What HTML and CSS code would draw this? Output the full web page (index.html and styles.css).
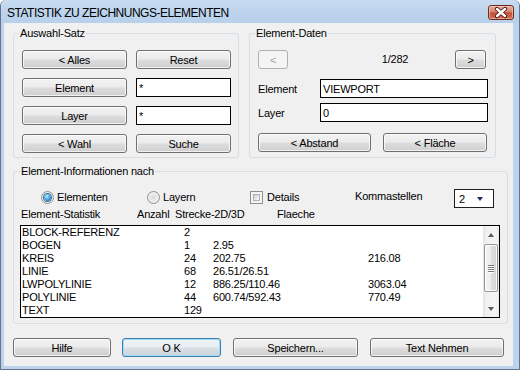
FILE: index.html
```html
<!DOCTYPE html>
<html lang="de">
<head>
<meta charset="utf-8">
<title>Statistik zu Zeichnungs-Elementen</title>
<link rel="stylesheet" href="styles.css">
</head>
<body>
<div class="window">
  <div class="titlebar">
    <span class="title">STATISTIK ZU ZEICHNUNGS-ELEMENTEN</span>
    <button class="close" aria-label="Schließen">
      <svg width="24" height="13" viewBox="0 0 24 13">
        <path d="M8 3 L16 10 M16 3 L8 10" stroke="#4a1409" stroke-width="4.2" stroke-linecap="round" fill="none"/>
        <path d="M8 3 L16 10 M16 3 L8 10" stroke="#ffffff" stroke-width="2.4" stroke-linecap="round" fill="none"/>
      </svg>
    </button>
  </div>
  <div class="client">
    <div class="top-row">
      <fieldset class="group g-auswahl">
        <legend class="legend-shift">Auswahl-Satz</legend>
        <div class="auswahl-grid">
          <button class="btn">&lt; Alles</button>
          <button class="btn btn-inset">Reset</button>
          <button class="btn">Element</button>
          <input class="field" type="text" value="*">
          <button class="btn">Layer</button>
          <input class="field" type="text" value="*">
          <button class="btn">&lt; Wahl</button>
          <button class="btn btn-inset">Suche</button>
        </div>
      </fieldset>
      <fieldset class="group g-daten">
        <legend class="legend-shift">Element-Daten</legend>
        <div class="nav-row">
          <button class="btn btn-disabled btn-prev">&lt;</button>
          <span class="counter">1/282</span>
          <button class="btn btn-next">&gt;</button>
        </div>
        <div class="field-row row-element">
          <span class="field-label">Element</span>
          <input class="field field-grow" type="text" value="VIEWPORT">
        </div>
        <div class="field-row row-layer">
          <span class="field-label">Layer</span>
          <input class="field field-grow" type="text" value="0">
        </div>
        <div class="daten-buttons">
          <button class="btn btn-abstand">&lt; Abstand</button>
          <button class="btn btn-flaeche">&lt; Fläche</button>
        </div>
      </fieldset>
    </div>

    <fieldset class="group g-info">
      <legend>Element-Informationen nach</legend>
      <div class="options-row">
        <label class="opt opt-elementen"><span class="radio on"><span class="dot"></span></span>Elementen</label>
        <label class="opt opt-layern"><span class="radio"></span>Layern</label>
        <label class="opt opt-details"><span class="check"><span class="check-inner"></span></span>Details</label>
        <span class="opt opt-komma">Kommastellen</span>
        <div class="combo"><span>2</span><span class="combo-arrow"></span></div>
      </div>
      <div class="list-head">
        <span>Element-Statistik</span>
        <span>Anzahl</span>
        <span>Strecke-2D/3D</span>
        <span>Flaeche</span>
      </div>
      <div class="listbox">
        <div class="rows">
          <div class="row"><span>BLOCK-REFERENZ</span><span>2</span><span></span><span></span></div>
          <div class="row"><span>BOGEN</span><span>1</span><span>2.95</span><span></span></div>
          <div class="row"><span>KREIS</span><span>24</span><span>202.75</span><span>216.08</span></div>
          <div class="row"><span>LINIE</span><span>68</span><span>26.51/26.51</span><span></span></div>
          <div class="row"><span>LWPOLYLINIE</span><span>12</span><span>886.25/110.46</span><span>3063.04</span></div>
          <div class="row"><span>POLYLINIE</span><span>44</span><span>600.74/592.43</span><span>770.49</span></div>
          <div class="row"><span>TEXT</span><span>129</span><span></span><span></span></div>
        </div>
        <div class="scrollbar">
          <div class="sb-btn"><span class="arrow-up"></span></div>
          <div class="sb-thumb"><span class="grip"></span><span class="grip"></span><span class="grip"></span><span class="grip"></span></div>
          <div class="sb-track"></div>
          <div class="sb-btn"><span class="arrow-down"></span></div>
        </div>
      </div>
    </fieldset>

    <div class="bottom-row">
      <button class="btn b-hilfe">Hilfe</button>
      <button class="btn btn-default b-ok">O K</button>
      <button class="btn b-speichern">Speichern...</button>
      <button class="btn b-text">Text Nehmen</button>
    </div>
  </div>
</div>
</body>
</html>
```

FILE: styles.css
```css
* { box-sizing: border-box; }
html, body { margin: 0; padding: 0; }
body {
  width: 520px;
  height: 370px;
  overflow: hidden;
  background: #ffffff;
  font-family: "Liberation Sans", Arial, sans-serif;
  font-size: 11px;
  letter-spacing: -0.2px;
  color: #000;
}

.window {
  width: 520px;
  height: 370px;
  display: flex;
  flex-direction: column;
  background: #bdd3eb;
  border: 1px solid #62758c;
  border-top: none;
  border-radius: 6px 6px 0 0;
}

.titlebar {
  height: 23px;
  flex: none;
  display: flex;
  align-items: flex-start;
  padding: 0 5px 0 6px;
  background: linear-gradient(to bottom, #c8dcf1 0%, #bcd3ec 60%, #b8d0ea 100%);
  border-radius: 6px 6px 0 0;
}
.title {
  margin-top: 6px;
  font-size: 12px;
  letter-spacing: -0.5px;
  line-height: 14px;
  white-space: nowrap;
}
.close {
  margin: 5px 0 0 auto;
  width: 26px;
  height: 15px;
  padding: 0;
  border: 1px solid #6b2a1c;
  border-radius: 3px;
  background: linear-gradient(to bottom, #e9ad9e 0%, #d8836f 45%, #c5513a 52%, #cf6c52 100%);
  box-shadow: inset 0 0 0 1px rgba(255, 220, 210, 0.55);
  display: flex;
  align-items: center;
  justify-content: center;
}
.close svg { display: block; }

.client {
  flex: 1;
  margin: 0 6px 3px 3px;
  background: #f0f0f0;
  padding: 3px 0 0 9px;
}

.top-row {
  display: flex;
  gap: 10px;
  align-items: stretch;
}

.group {
  margin: 0;
  min-width: 0;
  border: 1px solid #d5dfe5;
  border-radius: 3px;
}
.group legend {
  padding: 0 1px;
  line-height: 14px;
  height: 14px;
}
.legend-shift { margin-left: -3px; }

.g-auswahl {
  width: 226px;
  padding: 10px 7px 4px 8px;
}
.auswahl-grid {
  display: grid;
  grid-template-columns: 105px 95px;
  grid-auto-rows: 19px;
  column-gap: 9px;
  row-gap: 9px;
}
.btn-inset { margin: 0 1px; }

.g-daten {
  width: 247px;
  padding: 10px 7px 4px 8px;
}

.btn {
  margin: 0;
  padding: 0;
  height: 19px;
  font: inherit;
  letter-spacing: inherit;
  color: #000;
  border: 1px solid #707070;
  border-radius: 3px;
  background: linear-gradient(to bottom, #f2f2f2 0%, #ebebeb 48%, #dddddd 52%, #cfcfcf 100%);
  box-shadow: inset 0 0 0 1px rgba(255, 255, 255, 0.7);
  display: flex;
  align-items: center;
  justify-content: center;
  white-space: nowrap;
}
.btn-disabled {
  color: #a3a3a3;
  border-color: #adb2b5;
  background: #f4f4f4;
  box-shadow: none;
}
.btn-default {
  border-color: #3c7fb1;
  box-shadow: inset 0 0 0 1px #9fdcf5;
  background: linear-gradient(to bottom, #f0f4f7 0%, #e9eef2 48%, #d9e0e5 52%, #ccd5dc 100%);
}

.field {
  margin: 0;
  height: 19px;
  padding: 0 2px;
  font: inherit;
  letter-spacing: inherit;
  color: #000;
  background: #fff;
  border: 1px solid #000;
  border-radius: 0;
  outline: none;
  min-width: 0;
  width: 100%;
}

.nav-row {
  display: flex;
  height: 19px;
}
.btn-prev { width: 30px; }
.btn-next { width: 31px; margin-right: 2px; }
.counter {
  flex: 1;
  padding-left: 47px;
  text-align: center;
  line-height: 19px;
}

.field-row {
  display: flex;
  align-items: center;
  height: 19px;
}
.row-element { margin-top: 10px; }
.row-layer { margin-top: 5px; }
.field-label { width: 62px; flex: none; }
.field-grow { flex: 1; }

.daten-buttons {
  display: flex;
  gap: 12px;
  margin-top: 11px;
}
.btn-abstand { width: 113px; }
.btn-flaeche { width: 104px; }

.g-info {
  width: 495px;
  margin-top: 6px;
  padding: 11px 7px 5px 6px;
}

.options-row {
  display: flex;
  align-items: center;
  height: 19px;
  padding-left: 21px;
}
.opt {
  display: flex;
  align-items: center;
  gap: 3px;
  flex: none;
}
.opt-elementen { width: 106px; margin-top: -3px; }
.opt-layern { width: 103px; margin-top: -3px; }
.opt-details { width: 105px; gap: 4px; margin-top: -3px; }
.opt-komma { width: 99px; margin-top: -6px; }

.radio {
  width: 13px;
  height: 13px;
  border-radius: 50%;
  border: 1px solid #8e8f8f;
  background: radial-gradient(circle at 50% 50%, #dadada 0%, #ececec 55%, #f7f7f7 100%);
  display: flex;
  align-items: center;
  justify-content: center;
  flex: none;
}
.dot {
  width: 7px;
  height: 7px;
  border-radius: 50%;
  background: radial-gradient(circle at 40% 35%, #c4ecfd 0%, #4aa9e6 45%, #1d5f99 100%);
  box-shadow: 0 0 0 1px #3c6e99;
}

.check {
  width: 13px;
  height: 13px;
  border: 1px solid #8e8f8f;
  background: #f4f4f4;
  padding: 2px;
  flex: none;
}
.check-inner {
  display: block;
  width: 100%;
  height: 100%;
  border: 1px solid #b0b4b8;
  background: linear-gradient(135deg, #cdcdcd 0%, #eeeeee 70%, #f9f9f9 100%);
}

.combo {
  width: 40px;
  height: 19px;
  flex: none;
  border: 1px solid #1f1f1f;
  background: #fff;
  display: flex;
  align-items: center;
  padding-left: 4px;
}
.combo span:first-child { width: 18px; }
.combo-arrow {
  width: 0;
  height: 0;
  border-left: 3.5px solid transparent;
  border-right: 3.5px solid transparent;
  border-top: 4px solid #1d2c5c;
}

.list-head {
  display: grid;
  grid-template-columns: 116px 38px 102px 1fr;
  height: 17px;
  line-height: 13px;
  padding-left: 1px;
}

.listbox {
  height: 93px;
  border: 1px solid #000;
  background: #fff;
  display: flex;
}
.rows {
  flex: 1;
  padding-left: 1px;
}
.row {
  display: grid;
  grid-template-columns: 162px 29px 155px 1fr;
  height: 13px;
  line-height: 13px;
  white-space: nowrap;
}

.scrollbar {
  width: 16px;
  flex: none;
  display: flex;
  flex-direction: column;
  background: linear-gradient(to right, #e3e3e3 0%, #f0f0f0 20%, #f5f5f5 80%, #eaeaea 100%);
}
.sb-btn {
  height: 17px;
  display: flex;
  align-items: center;
  justify-content: center;
  flex: none;
}
.arrow-up {
  width: 0; height: 0;
  border-left: 3.5px solid transparent;
  border-right: 3.5px solid transparent;
  border-bottom: 4px solid #5a5a5a;
}
.arrow-down {
  width: 0; height: 0;
  border-left: 3.5px solid transparent;
  border-right: 3.5px solid transparent;
  border-top: 4px solid #5a5a5a;
}
.sb-thumb {
  height: 48px;
  margin: 1px 1px 0 1px;
  border: 1px solid #979797;
  border-radius: 2px;
  background: linear-gradient(to right, #f4f4f4 0%, #ececec 50%, #dedede 52%, #d4d4d4 100%);
  box-shadow: inset 0 0 0 1px rgba(255,255,255,0.8);
  display: flex;
  flex-direction: column;
  align-items: center;
  justify-content: center;
  gap: 1px;
  flex: none;
}
.grip {
  width: 6px;
  height: 1px;
  background: #7a7a7a;
  box-shadow: 0 1px 0 #ffffff;
}
.sb-track { flex: 1; }

.bottom-row {
  display: flex;
  margin-top: 14px;
}
.b-hilfe { width: 98px; }
.b-ok { width: 99px; margin-left: 11px; }
.b-speichern { width: 125px; margin-left: 12px; }
.b-text { width: 134px; margin-left: 12px; }
```
